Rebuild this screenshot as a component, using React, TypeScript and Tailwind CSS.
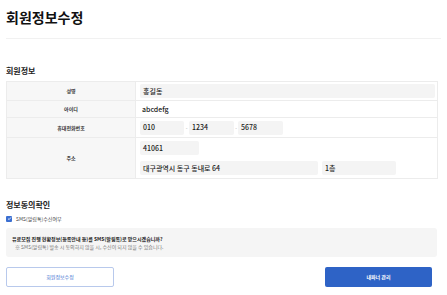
import React from "react";

const font = { fontFamily: '"Noto Sans CJK KR", "Noto Sans", sans-serif' };

function Input({ w, children }: { w: string; children?: React.ReactNode }) {
  return (
    <div className={`${w} h-[14px] bg-[#f4f4f4] rounded-[2px] flex items-center px-[3px] text-[7px] font-medium text-[#222]`}>
      {children}
    </div>
  );
}

function Row({ label, h, children, last }: { label: string; h: string; children: React.ReactNode; last?: boolean }) {
  return (
    <div className={`flex ${h} ${last ? "" : "border-b border-[#ececec]"}`}>
      <div className="w-[129px] shrink-0 bg-[#f7f7f7] flex items-center justify-center text-[5px] font-bold text-[#333] border-r border-[#ececec]">
        {label}
      </div>
      <div className="flex-1 flex flex-col justify-center gap-[6px] pl-[4px]">{children}</div>
    </div>
  );
}

export default function App() {
  return (
    <div style={font} className="w-[447px] h-[295px] bg-white overflow-hidden">
      <div className="px-[6px] pt-[9px]">
        <div className="text-[14px] font-bold text-[#111] leading-[17px]">회원정보수정</div>
      </div>
      <div className="mx-[6px] mt-[12px] h-px bg-[#f1f1f1]" />
      <div className="px-[6px]">
        <div className="mt-[27px] text-[8px] font-bold text-[#222] leading-[10px]">회원정보</div>
        <div className="mt-[5px] w-[432px] border border-[#ececec]">
          <Row label="성명" h="h-[19px]">
            <div className="pr-[2px]">
              <Input w="w-full">홍길동</Input>
            </div>
          </Row>
          <Row label="아이디" h="h-[17px]">
            <div className="text-[7px] font-medium text-[#222] pl-[2px]">abcdefg</div>
          </Row>
          <Row label="휴대전화번호" h="h-[20px]">
            <div className="flex items-center">
              <Input w="w-[44px]">010</Input>
              <span className="w-[5px] text-center text-[5px] text-[#999]">-</span>
              <Input w="w-[45px]">1234</Input>
              <span className="w-[4px] text-center text-[5px] text-[#999]">-</span>
              <Input w="w-[45px]">5678</Input>
            </div>
          </Row>
          <Row label="주소" h="h-[40px]" last>
            <Input w="w-[59px]">41061</Input>
            <div className="flex gap-[4px]">
              <Input w="w-[178px]">대구광역시 동구 동내로 64</Input>
              <Input w="w-[74px]">1층</Input>
            </div>
          </Row>
        </div>
        <div className="mt-[21px] text-[8px] font-bold text-[#222] leading-[10px]">정보동의확인</div>
        <div className="mt-[5px] flex items-center gap-[4px]">
          <div className="w-[6px] h-[6px] bg-[#3b6fd1] rounded-[1px] flex items-center justify-center">
            <svg width="5" height="5" viewBox="0 0 10 10">
              <path d="M2 5.2 L4.2 7.3 L8 2.8" stroke="white" strokeWidth="1.6" fill="none" />
            </svg>
          </div>
          <span className="text-[5px] text-[#444]">SMS(알림톡)수신여부</span>
        </div>
        <div className="mt-[5px] w-[431px] h-[29px] bg-[#f5f5f5] rounded-[3px] px-[6px] flex flex-col justify-center gap-[1px]">
          <div className="text-[5px] font-bold text-[#222] leading-[7px]">
            유료모집 진행 현황정보(등록안내 등)를 SMS(알림톡)로 받으시겠습니까?
          </div>
          <div className="text-[5px] text-[#777] leading-[7px] pl-[3px]">
            ※ SMS(알림톡) 발송 시 동의하지 않을 시, 수신이 되지 않을 수 있습니다.
          </div>
        </div>
        <div className="mt-[10px] flex justify-between pr-[9px]">
          <div className="w-[108px] h-[20px] border border-[#b8c9ec] rounded-[2px] bg-white flex items-center justify-center text-[5px] text-[#3b6fd1]">
            회원정보수정
          </div>
          <div className="w-[107px] h-[20px] bg-[#2e63c6] rounded-[2px] flex items-center justify-center text-[5px] text-white font-bold">
            내파너 관리
          </div>
        </div>
      </div>
    </div>
  );
}
